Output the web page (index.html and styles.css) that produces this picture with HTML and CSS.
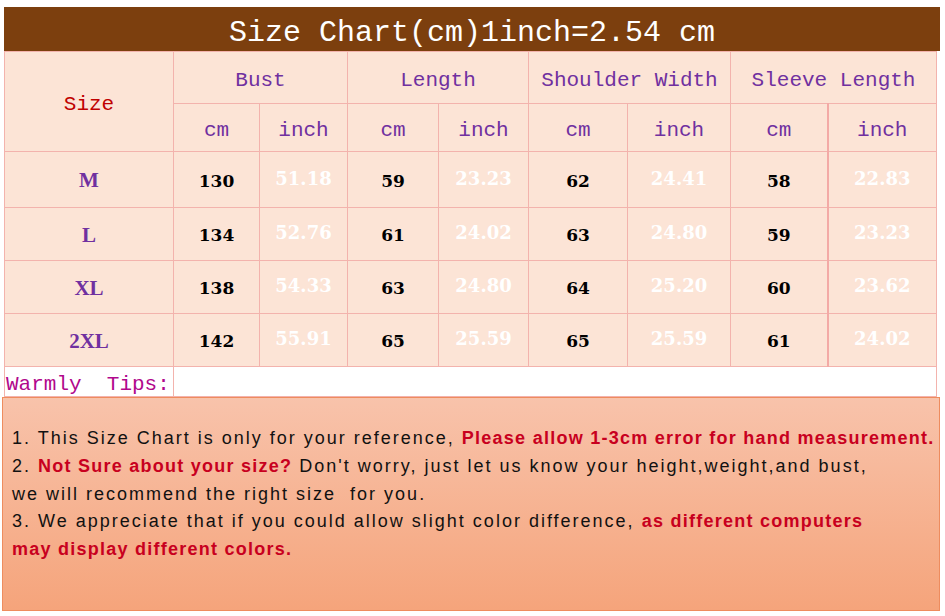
FILE: index.html
```html
<!DOCTYPE html>
<html>
<head>
<meta charset="utf-8">
<link rel="stylesheet" href="styles.css">
</head>
<body>
<div class="page">
  <div class="title">Size Chart(cm)1inch=2.54 cm</div>
  <table class="chart">
    <colgroup>
      <col class="c-size"><col class="c1"><col class="c2"><col class="c3"><col class="c4"><col class="c5"><col class="c6"><col class="c7"><col class="c8">
    </colgroup>
    <tr class="h1">
      <th rowspan="2" class="size-head">Size</th>
      <th colspan="2">Bust</th>
      <th colspan="2">Length</th>
      <th colspan="2">Shoulder Width</th>
      <th colspan="2">Sleeve Length</th>
    </tr>
    <tr class="h2">
      <th>cm</th><th>inch</th><th>cm</th><th>inch</th><th>cm</th><th>inch</th><th>cm</th><th class="thick">inch</th>
    </tr>
    <tr class="r first">
      <td class="sz">M</td><td class="num">130</td><td class="in">51.18</td><td class="num">59</td><td class="in">23.23</td><td class="num">62</td><td class="in">24.41</td><td class="num">58</td><td class="in thick">22.83</td>
    </tr>
    <tr class="r">
      <td class="sz">L</td><td class="num">134</td><td class="in">52.76</td><td class="num">61</td><td class="in">24.02</td><td class="num">63</td><td class="in">24.80</td><td class="num">59</td><td class="in thick">23.23</td>
    </tr>
    <tr class="r">
      <td class="sz">XL</td><td class="num">138</td><td class="in">54.33</td><td class="num">63</td><td class="in">24.80</td><td class="num">64</td><td class="in">25.20</td><td class="num">60</td><td class="in thick">23.62</td>
    </tr>
    <tr class="r">
      <td class="sz">2XL</td><td class="num">142</td><td class="in">55.91</td><td class="num">65</td><td class="in">25.59</td><td class="num">65</td><td class="in">25.59</td><td class="num">61</td><td class="in thick">24.02</td>
    </tr>
    <tr class="tips">
      <td class="tips-label">Warmly&nbsp;&nbsp;Tips:</td>
      <td colspan="8" class="tips-blank"></td>
    </tr>
  </table>
  <div class="notes">
    <p>1. This Size Chart is only for your reference, <span class="red">Please allow 1-3cm error for hand measurement.</span></p>
    <p>2. <span class="red">Not Sure about your size?</span> Don't worry, just let us know your height,weight,and bust,</p>
    <p>we will recommend the right size&nbsp; for you.</p>
    <p>3. We appreciate that if you could allow slight color difference, <span class="red">as different computers</span></p>
    <p><span class="red">may display different colors.</span></p>
  </div>
</div>
</body>
</html>
```
FILE: styles.css
```css
html, body {
  margin: 0;
  padding: 0;
  background: #ffffff;
}
.page {
  width: 945px;
  height: 616px;
  padding-top: 7px;
  box-sizing: border-box;
}
.title {
  margin-left: 4px;
  width: 936px;
  height: 44px;
  background: #7c3f0e;
  color: #ffffff;
  font-family: "Liberation Mono", "DejaVu Sans Mono", monospace;
  font-size: 30px;
  line-height: 52px;
  text-align: center;
}
.chart {
  margin-left: 4px;
  width: 933px;
  border-collapse: collapse;
  table-layout: fixed;
}
.c-size { width: 169px; }
.c1 { width: 86px; }
.c2 { width: 88px; }
.c3 { width: 91px; }
.c4 { width: 90px; }
.c5 { width: 99px; }
.c6 { width: 103px; }
.c7 { width: 97px; }
.c8 { width: 109px; }
.chart th, .chart td {
  border: 1px solid #f3b3ad;
  padding: 0;
  text-align: center;
  background: #fce4d6;
}
.chart th {
  font-family: "Liberation Mono", "DejaVu Sans Mono", monospace;
  font-weight: normal;
  font-size: 21px;
  color: #7030a0;
  padding-top: 6px;
}
.h1 th { height: 45px; }
.h2 th { height: 41px; }
.chart th.size-head { color: #c00000; }
.r td { height: 52px; }
.r.first td { height: 55px; }
.chart td.sz {
  font-family: "Liberation Serif", "Times New Roman", serif;
  font-weight: bold;
  font-size: 21px;
  color: #7030a0;
  padding-top: 2px;
}
.r td.sz { height: 50px; }
.r.first td.sz { height: 53px; }
.chart td.num {
  font-family: "DejaVu Serif", serif;
  font-weight: bold;
  font-size: 17px;
  color: #000000;
  padding-top: 2px;
}
.r td.num { height: 50px; }
.r.first td.num { height: 53px; }
.chart td.in {
  font-family: "DejaVu Serif", serif;
  font-weight: bold;
  font-size: 18px;
  color: #ffffff;
  padding-bottom: 3px;
}
.r td.in { height: 49px; }
.r.first td.in { height: 52px; }
.chart .thick { border-left: 2px solid #f3aaa6; }
.chart td.tips-label {
  height: 29px;
  background: #ffffff;
  text-align: left;
  font-family: "Liberation Mono", "DejaVu Sans Mono", monospace;
  font-size: 21px;
  color: #b1088c;
  padding-left: 1px;
  vertical-align: bottom;
  line-height: 22px;
}
.chart td.tips-blank { background: #ffffff; }
.notes {
  margin-left: 2px;
  width: 938px;
  height: 214px;
  box-sizing: border-box;
  border: 1px solid #ee8c5e;
  background: linear-gradient(#f8c3ab, #f5a47b);
  padding: 27px 0 0 9px;
  font-family: "Liberation Sans", Arial, sans-serif;
  font-size: 18px;
  color: #111111;
}
.notes p {
  margin: 0;
  line-height: 27.8px;
  white-space: nowrap;
  letter-spacing: 2px;
}
.notes .red {
  color: #c8001e;
  font-weight: bold;
  letter-spacing: 1.25px;
}
```
